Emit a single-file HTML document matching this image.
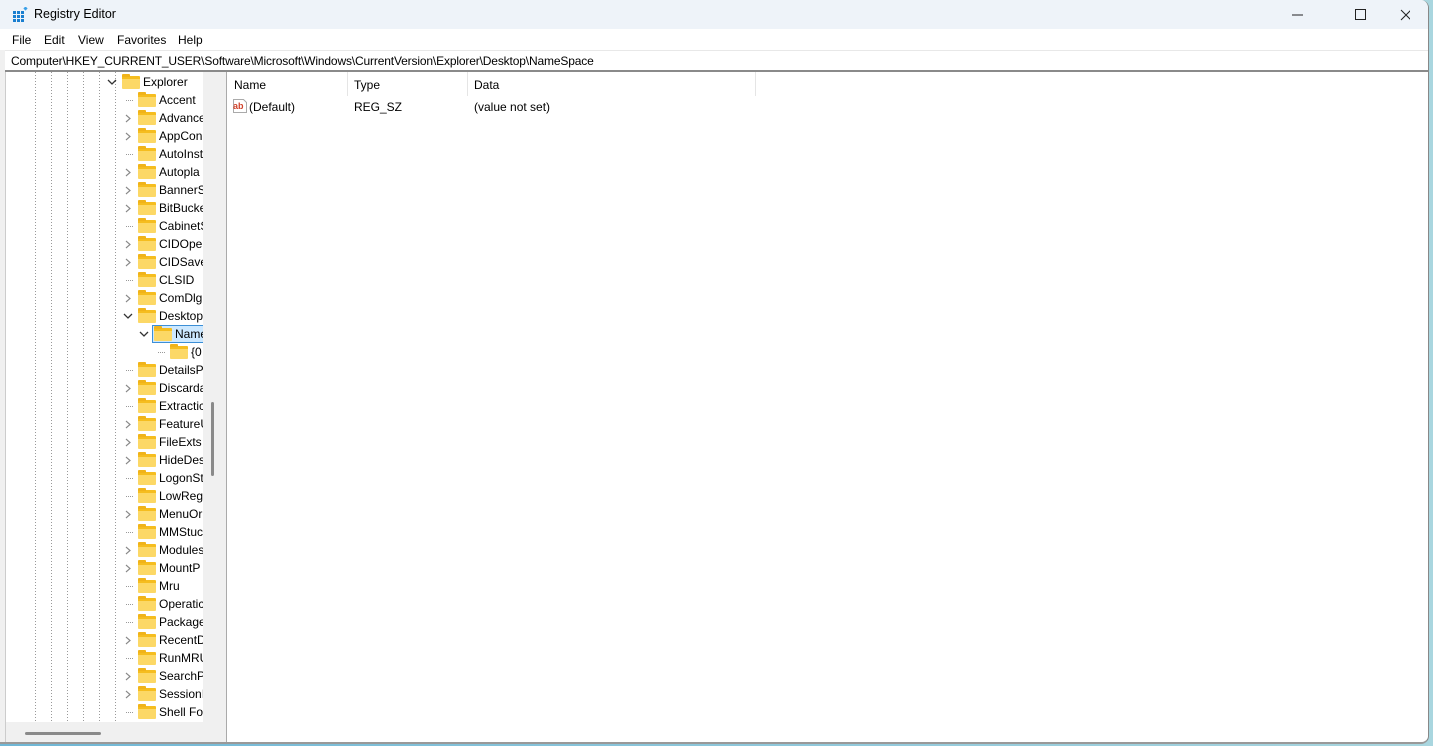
<!DOCTYPE html>
<html><head><meta charset="utf-8"><style>
*{margin:0;padding:0;box-sizing:border-box}
body{width:1433px;height:746px;overflow:hidden;background:linear-gradient(90deg,#6fb7d6,#a9d6df);font-family:"Liberation Sans",sans-serif;font-size:12px;color:#000;position:relative}
.win{position:absolute;left:0;top:0;width:1429px;height:744px;background:#f0f0f0;border-radius:0 8px 8px 0;overflow:hidden;border-right:1px solid #888;border-bottom:2px solid #999}
.title{position:absolute;left:0;top:0;width:100%;height:29px;background:#eef3f9}
.title span{position:absolute;left:34px;top:7px;font-size:12.5px}
.menu{position:absolute;left:0;top:29px;width:100%;height:21px;background:#fff}
.menu span{position:absolute;top:4px;font-size:12px}
.addr{position:absolute;left:5px;top:50px;width:1423px;height:22px;background:#fff;border-top:1px solid #e8e8e8;border-bottom:2px solid #8a8a8a}
.addr span{position:absolute;left:6px;top:3px;font-size:12px;letter-spacing:-0.15px}
.tree{position:absolute;left:5px;top:72px;width:215px;height:670px;background:#f0f0f0;border-left:1px solid #ccc}
.tc{position:absolute;left:0;top:0;width:197px;height:650px;background:#fff;overflow:hidden}
.vl{position:absolute;top:0;width:1px;height:650px;background:repeating-linear-gradient(#999 0 1px,transparent 1px 3px)}
.row{position:absolute;height:18px;white-space:nowrap;font-size:12px;line-height:18px}
.f{position:absolute;width:18px;height:13px;top:3px;background:linear-gradient(#f5bd1f 0 3px,#fcd866 3px);border-radius:1px}
.f:before{content:"";position:absolute;left:0;top:-2px;width:8px;height:3px;background:#f0b31a;border-radius:1px 1px 0 0}
.hd{position:absolute;top:9px;width:8px;height:1px;background:repeating-linear-gradient(90deg,#999 0 1px,transparent 1px 2px)}
.right{position:absolute;left:226px;top:72px;width:1202px;height:670px;background:#fff;border-left:1px solid #aaa}
.hdr span{position:absolute;top:6px;font-size:12px}
.sep{position:absolute;top:0;width:1px;height:24px;background:#e5e5e5}
</style></head><body>
<div class="win">
<div class="title">
<svg style="position:absolute;left:12px;top:7px" width="16" height="16" viewBox="0 0 16 16"><g fill="#1a7fd0"><rect x="1" y="4" width="3" height="3"/><rect x="5" y="4" width="3" height="3"/><rect x="9" y="4" width="3" height="3"/><rect x="1" y="8" width="3" height="3"/><rect x="5" y="8" width="3" height="3"/><rect x="9" y="8" width="3" height="3"/><rect x="1" y="12" width="3" height="3"/><rect x="5" y="12" width="3" height="3"/><rect x="9" y="12" width="3" height="3"/><rect x="12" y="0" width="3" height="3" transform="rotate(45 13.5 1.5)" fill="#3aa0e8"/></g></svg>
<span>Registry Editor</span>
<svg style="position:absolute;left:1290px;top:8px" width="120" height="14"><path d="M2 7H13" stroke="#222"/><path d="M65.5 1.5h10v10h-10z" fill="none" stroke="#222"/><path d="M111 2l10 10M121 2l-10 10" stroke="#222"/></svg>
</div>
<div class="menu"><span style="left:12px">File</span><span style="left:44px">Edit</span><span style="left:78px">View</span><span style="left:117px">Favorites</span><span style="left:178px">Help</span></div>
<div class="addr"><span>Computer\HKEY_CURRENT_USER\Software\Microsoft\Windows\CurrentVersion\Explorer\Desktop\NameSpace</span></div>
<div class="tree"><div class="tc" id="tc">
<div class="vl" style="left:29px"></div><div class="vl" style="left:45px"></div><div class="vl" style="left:61px"></div><div class="vl" style="left:77px"></div><div class="vl" style="left:93px"></div><div class="vl" style="left:109px"></div>
</div>
<div style="position:absolute;left:205px;top:330px;width:3px;height:74px;background:#8a8a8a;border-radius:2px"></div>
<div style="position:absolute;left:19px;top:660px;width:76px;height:3px;background:#8a8a8a;border-radius:2px"></div>
</div>
<div class="right">
<div class="hdr"><span style="left:7px">Name</span><span style="left:127px">Type</span><span style="left:247px">Data</span></div>
<div class="sep" style="left:120px"></div><div class="sep" style="left:240px"></div><div class="sep" style="left:528px"></div>
<svg style="position:absolute;left:5px;top:26px" width="16" height="16"><path d="M1.5 1.5h10l3 3v10h-13z" fill="#fff" stroke="#aaa"/><text x="1" y="11" font-size="9" font-weight="bold" fill="#d0412a" font-family="Liberation Sans">ab</text></svg>
<span style="position:absolute;left:22px;top:28px">(Default)</span>
<span style="position:absolute;left:127px;top:28px">REG_SZ</span>
<span style="position:absolute;left:247px;top:28px">(value not set)</span>
</div>
</div>
<script>
var rows=[["Explorer",0,"v"],["Accent",1,"."],["Advance",1,">"],["AppCon",1,">"],["AutoInst",1,"."],["Autopla",1,">"],["BannerS",1,">"],["BitBucke",1,">"],["CabinetS",1,"."],["CIDOpen",1,">"],["CIDSave",1,">"],["CLSID",1,"."],["ComDlg",1,">"],["Desktop",1,"v"],["NameSpace",2,"v"],["{0",3,"."],["DetailsP",1,"."],["Discarda",1,">"],["Extractic",1,"."],["FeatureU",1,">"],["FileExts",1,">"],["HideDes",1,">"],["LogonSt",1,"."],["LowReg",1,"."],["MenuOr",1,">"],["MMStuc",1,"."],["Modules",1,">"],["MountP",1,">"],["Mru",1,"."],["Operatic",1,"."],["Package",1,"."],["RecentD",1,">"],["RunMRU",1,"."],["SearchP",1,">"],["SessionI",1,">"],["Shell Fol",1,"."],["",1,"."]];
var h="";
rows.forEach(function(r,i){
 var y=1+i*18, fx=116+16*r[1], cx=fx-14;
 var s='<div class="row" style="left:0;top:'+y+'px;width:200px">';
 if(r[2]==">") s+='<svg style="position:absolute;left:'+cx+'px;top:5px" width="8" height="9"><path d="M2 1l4 3.5L2 8" fill="none" stroke="#888" stroke-width="1.2"/></svg>';
 else if(r[2]=="v") s+='<svg style="position:absolute;left:'+(cx-1)+'px;top:6px" width="10" height="7"><path d="M1 1l4 4 4-4" fill="none" stroke="#333" stroke-width="1.3"/></svg>';
 else s+='<div class="hd" style="left:'+(cx+2)+'px"></div>';
 if(i==14) s+='<div style="position:absolute;left:'+(fx-2)+'px;top:0;width:60px;height:18px;background:#cce8ff;border:1px solid #3c8fd6"></div>';
 s+='<div class="f" style="left:'+fx+'px"></div><span style="position:absolute;left:'+(fx+21)+'px;top:0">'+r[0]+'</span></div>';
 h+=s;
});
document.getElementById("tc").insertAdjacentHTML("beforeend",h);
</script>
</body></html>
